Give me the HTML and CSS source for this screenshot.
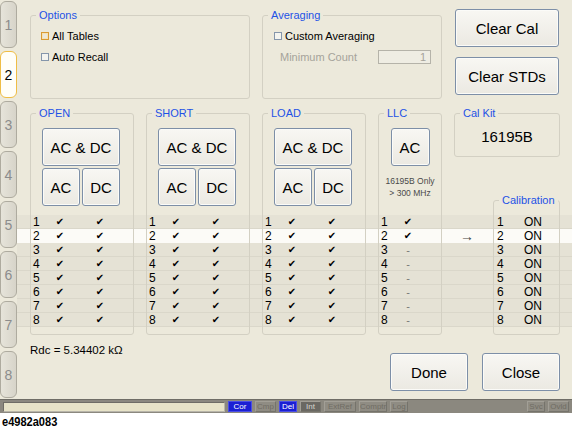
FILE: index.html
```html
<!DOCTYPE html>
<html>
  <head>
    <title>Fixture Compensation</title>
    <link rel="stylesheet" href="styles.css">
  </head>
  <body>
    <div class="window">
      <div class="tabs">
        <div class="tab">1</div>
        <div class="tab active">2</div>
        <div class="tab">3</div>
        <div class="tab">4</div>
        <div class="tab">5</div>
        <div class="tab">6</div>
        <div class="tab">7</div>
        <div class="tab">8</div>
      </div>

      <div class="panel">
        <div class="top-row">
          <fieldset class="group options">
            <legend>Options</legend>
            <div class="option-list">
              <label class="check-item"><span class="checkbox focused"></span>All Tables</label>
              <label class="check-item"><span class="checkbox"></span>Auto Recall</label>
            </div>
          </fieldset>

          <fieldset class="group averaging">
            <legend>Averaging</legend>
            <div class="option-list">
              <label class="check-item"><span class="checkbox"></span>Custom Averaging</label>
              <div class="count-field">
                <span>Minimum Count</span>
                <span class="input">1</span>
              </div>
            </div>
          </fieldset>

          <div class="side-buttons">
            <button class="button">Clear Cal</button>
            <button class="button">Clear STDs</button>
          </div>
        </div>

        <div class="std-row">
          <fieldset class="group std">
            <legend>OPEN</legend>
            <div class="std-buttons">
              <button class="button both">AC &amp; DC</button>
              <button class="button">AC</button>
              <button class="button">DC</button>
            </div>
            <div class="rows">
              <div class="row"><span>1</span><span class="c">✔</span><span class="c">✔</span></div>
              <div class="row"><span>2</span><span class="c">✔</span><span class="c">✔</span></div>
              <div class="row"><span>3</span><span class="c">✔</span><span class="c">✔</span></div>
              <div class="row"><span>4</span><span class="c">✔</span><span class="c">✔</span></div>
              <div class="row"><span>5</span><span class="c">✔</span><span class="c">✔</span></div>
              <div class="row"><span>6</span><span class="c">✔</span><span class="c">✔</span></div>
              <div class="row"><span>7</span><span class="c">✔</span><span class="c">✔</span></div>
              <div class="row"><span>8</span><span class="c">✔</span><span class="c">✔</span></div>
            </div>
          </fieldset>

          <fieldset class="group std">
            <legend>SHORT</legend>
            <div class="std-buttons">
              <button class="button both">AC &amp; DC</button>
              <button class="button">AC</button>
              <button class="button">DC</button>
            </div>
            <div class="rows">
              <div class="row"><span>1</span><span class="c">✔</span><span class="c">✔</span></div>
              <div class="row"><span>2</span><span class="c">✔</span><span class="c">✔</span></div>
              <div class="row"><span>3</span><span class="c">✔</span><span class="c">✔</span></div>
              <div class="row"><span>4</span><span class="c">✔</span><span class="c">✔</span></div>
              <div class="row"><span>5</span><span class="c">✔</span><span class="c">✔</span></div>
              <div class="row"><span>6</span><span class="c">✔</span><span class="c">✔</span></div>
              <div class="row"><span>7</span><span class="c">✔</span><span class="c">✔</span></div>
              <div class="row"><span>8</span><span class="c">✔</span><span class="c">✔</span></div>
            </div>
          </fieldset>

          <fieldset class="group std">
            <legend>LOAD</legend>
            <div class="std-buttons">
              <button class="button both">AC &amp; DC</button>
              <button class="button">AC</button>
              <button class="button">DC</button>
            </div>
            <div class="rows">
              <div class="row"><span>1</span><span class="c">✔</span><span class="c">✔</span></div>
              <div class="row"><span>2</span><span class="c">✔</span><span class="c">✔</span></div>
              <div class="row"><span>3</span><span class="c">✔</span><span class="c">✔</span></div>
              <div class="row"><span>4</span><span class="c">✔</span><span class="c">✔</span></div>
              <div class="row"><span>5</span><span class="c">✔</span><span class="c">✔</span></div>
              <div class="row"><span>6</span><span class="c">✔</span><span class="c">✔</span></div>
              <div class="row"><span>7</span><span class="c">✔</span><span class="c">✔</span></div>
              <div class="row"><span>8</span><span class="c">✔</span><span class="c">✔</span></div>
            </div>
          </fieldset>

          <fieldset class="group llc">
            <legend>LLC</legend>
            <div class="llc-top">
              <button class="button">AC</button>
              <div class="llc-note">16195B Only<br>&gt; 300 MHz</div>
            </div>
            <div class="rows">
              <div class="row"><span>1</span><span class="c">✔</span></div>
              <div class="row"><span>2</span><span class="c">✔</span></div>
              <div class="row"><span>3</span><span class="c dash">-</span></div>
              <div class="row"><span>4</span><span class="c dash">-</span></div>
              <div class="row"><span>5</span><span class="c dash">-</span></div>
              <div class="row"><span>6</span><span class="c dash">-</span></div>
              <div class="row"><span>7</span><span class="c dash">-</span></div>
              <div class="row"><span>8</span><span class="c dash">-</span></div>
            </div>
          </fieldset>

          <div class="right-col">
            <fieldset class="group calkit">
              <legend>Cal Kit</legend>
              <div class="calkit-name">16195B</div>
            </fieldset>

            <div class="cal-area">
              <div class="pointer">
                <div class="row"></div>
                <div class="row">→</div>
              </div>
              <fieldset class="group calibration">
                <legend>Calibration</legend>
                <div class="rows">
                  <div class="row"><span>1</span><span>ON</span></div>
                  <div class="row"><span>2</span><span>ON</span></div>
                  <div class="row"><span>3</span><span>ON</span></div>
                  <div class="row"><span>4</span><span>ON</span></div>
                  <div class="row"><span>5</span><span>ON</span></div>
                  <div class="row"><span>6</span><span>ON</span></div>
                  <div class="row"><span>7</span><span>ON</span></div>
                  <div class="row"><span>8</span><span>ON</span></div>
                </div>
              </fieldset>
            </div>
          </div>
        </div>

        <div class="bottom-row">
          <div class="rdc">Rdc = 5.34402 kΩ</div>
          <div class="dialog-buttons">
            <button class="button">Done</button>
            <button class="button">Close</button>
          </div>
        </div>
      </div>
    </div>

    <div class="status-bar">
      <div class="status-field"></div>
      <span class="ind on w24">Cor</span>
      <span class="ind w21">Cmp</span>
      <span class="ind on w18">Del</span>
      <span class="ind dark w21">Int</span>
      <span class="ind w32">ExtRef</span>
      <span class="ind w28">Comptr</span>
      <span class="ind w18">Log</span>
      <span class="spacer"></span>
      <span class="ind w18">Svc</span>
      <span class="ind w21">Ovld</span>
    </div>

    <div class="caption"><span>e4982a083</span></div>
  </body>
</html>
```

FILE: styles.css
```css
body {
  margin: 0;
  width: 572px;
  height: 429px;
  overflow: hidden;
  font-family: "Liberation Sans", Arial, sans-serif;
  background: #ffffff;
  color: #000;
}

.window {
  display: flex;
  height: 399px;
  background: #ece9db;
}

/* Side tabs */
.tabs {
  width: 17px;
  display: flex;
  flex-direction: column;
  gap: 3px;
  padding-top: 1px;
}

.tab {
  height: 47px;
  box-sizing: border-box;
  border: 1px solid #aeab9f;
  border-radius: 6px;
  background: linear-gradient(to right, #e6e4da, #d7d4c9);
  color: #8c8c8c;
  font-size: 14px;
  display: flex;
  align-items: center;
  justify-content: center;
}

.tab.active {
  background: #fffef8;
  border-color: #efbd45;
  color: #000;
}

.panel {
  flex: 1;
  padding: 9px 12px 0 13px;
  background:
    linear-gradient(#fcfbf7, #fcfbf7) 0 229px / 100% 14px no-repeat,
    repeating-linear-gradient(#e5e2d5 0 13px, #dad7ca 13px 14px) 0 215px / 100% 112px no-repeat,
    #ece9db;
}

/* Group boxes */
.group {
  margin: 0;
  padding: 0;
  min-width: 0;
  box-sizing: border-box;
  border: 1px solid #d3d0c3;
  border-radius: 3px;
}

.group legend {
  margin-left: 5px;
  padding: 0 3px;
  font-size: 11px;
  line-height: 12px;
  color: #1e52e6;
}

.top-row {
  display: flex;
  align-items: flex-start;
}

.options {
  width: 220px;
  height: 90px;
}

.averaging {
  width: 180px;
  height: 90px;
  margin-left: 12px;
}

.option-list {
  padding: 8px 10px 0 10px;
  display: flex;
  flex-direction: column;
  gap: 7px;
}

.averaging .option-list {
  padding-left: 11px;
}

.check-item {
  display: flex;
  align-items: center;
  height: 14px;
  font-size: 11px;
}

.checkbox {
  width: 8px;
  height: 8px;
  box-sizing: border-box;
  border: 1px solid #8596ab;
  background: #f4f4ef;
  margin-right: 3px;
}

.checkbox.focused {
  border-color: #d99b35;
  background: #ebe8dc;
  box-shadow: inset 0 0 0 1px #f6e2b5;
}

.count-field {
  display: flex;
  justify-content: space-between;
  align-items: center;
  height: 14px;
  padding-left: 6px;
  font-size: 11px;
  color: #a5a39a;
}

.input {
  width: 53px;
  height: 14px;
  box-sizing: border-box;
  border: 1px solid #b5b3a9;
  background: #efede3;
  text-align: right;
  padding-right: 4px;
  line-height: 12px;
}

.side-buttons {
  margin-left: 13px;
  display: flex;
  flex-direction: column;
  gap: 10px;
}

.button {
  margin: 0;
  padding: 0;
  width: 104px;
  height: 38px;
  box-sizing: border-box;
  border: 1px solid #7d8fa7;
  border-radius: 3px;
  background: linear-gradient(#f8f7f3, #ebe9e2);
  box-shadow: inset 0 0 0 1px #fbfbf8;
  font-family: "Liberation Sans", Arial, sans-serif;
  font-size: 15px;
  color: #000;
}

/* Standards */
.std-row {
  margin-top: 8px;
  display: flex;
  align-items: flex-start;
  gap: 12px;
}

.std {
  width: 104px;
  padding: 9px 0 7px 0;
}

.std-buttons {
  margin-left: 11px;
  display: grid;
  grid-template-columns: 38px 38px;
  grid-auto-rows: 38px;
  gap: 2px;
}

.std-buttons .button {
  width: auto;
  height: auto;
}

.std-buttons .both {
  grid-column: 1 / 3;
}

.rows {
  margin-top: 9px;
}

.row {
  height: 14px;
  line-height: 14px;
  font-size: 12px;
  display: grid;
  grid-template-columns: 14px 26px 14px 26px;
  padding-left: 2px;
}

.row .c {
  font-family: "DejaVu Sans", sans-serif;
  font-size: 10px;
  text-align: center;
}

.row .c:nth-child(3) {
  grid-column: 4;
}

.row .dash {
  color: #777;
  font-family: "Liberation Sans", Arial, sans-serif;
  font-size: 11px;
}

.llc {
  width: 64px;
  padding: 9px 0 7px 0;
}

.llc-top {
  text-align: center;
}

.llc .button {
  width: 39px;
}

.llc-note {
  margin-top: 9px;
  font-size: 8.5px;
  line-height: 12px;
  color: #4a4a4a;
}

.llc .rows {
  margin-top: 16px;
}

.right-col {
  width: 106px;
}

.calkit {
  height: 50px;
  padding-top: 9px;
}

.calkit-name {
  text-align: center;
  font-size: 15px;
  line-height: 18px;
}

.cal-area {
  margin-top: 37px;
  display: flex;
}

.pointer {
  width: 39px;
  padding-top: 21px;
}

.pointer .row {
  display: block;
  padding-left: 6px;
  font-size: 14px;
  color: #444;
}

.calibration {
  width: 67px;
  padding: 9px 0 7px 0;
}

.calibration .rows {
  margin-top: 0;
}

.calibration .row {
  grid-template-columns: 27px auto;
  padding-left: 3px;
}

/* Bottom */
.bottom-row {
  display: flex;
  justify-content: space-between;
  align-items: flex-start;
}

.rdc {
  margin-top: 8px;
  font-size: 11.5px;
  line-height: 14px;
}

.dialog-buttons {
  margin-top: 18px;
  display: flex;
  gap: 14px;
}

.dialog-buttons .button {
  width: 78px;
}

/* Status bar */
.status-bar {
  height: 14px;
  box-sizing: border-box;
  background: #8b887f;
  border-top: 1px solid #6f6d66;
  display: flex;
  align-items: center;
  gap: 3px;
  padding: 0 3px;
}

.status-field {
  width: 222px;
  height: 10px;
  box-sizing: border-box;
  background: #e7e3c8;
  border: 1px solid #6f6d66;
  border-right-color: #b8b5aa;
  border-bottom-color: #b8b5aa;
}

.ind {
  height: 11px;
  box-sizing: border-box;
  border: 1px solid #a29f96;
  border-right-color: #75736b;
  border-bottom-color: #75736b;
  background: #8f8c83;
  color: #6f6c64;
  font-size: 8px;
  line-height: 9px;
  text-align: center;
}

.ind.on {
  background: #1b1fd4;
  border-color: #4a4ee6;
  color: #ffffff;
}

.ind.dark {
  background: #6a6862;
  color: #d4d4d0;
}

.w18 { width: 18px; }
.w21 { width: 21px; }
.w24 { width: 24px; }
.w28 { width: 28px; }
.w32 { width: 32px; }

.spacer {
  flex: 1;
}

.caption {
  height: 16px;
  padding-left: 2px;
  line-height: 16px;
}

.caption span {
  display: inline-block;
  font-size: 13px;
  font-weight: bold;
  transform: scaleX(0.85);
  transform-origin: left center;
}
```
